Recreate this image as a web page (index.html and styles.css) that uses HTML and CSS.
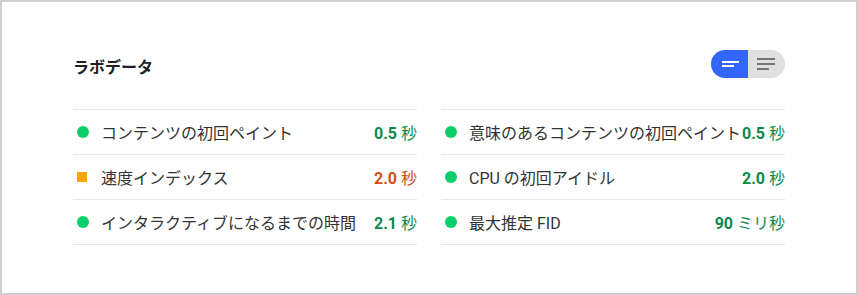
FILE: index.html
```html
<!DOCTYPE html>
<html lang="ja">
<head>
<meta charset="utf-8">
<link rel="stylesheet" href="styles.css">
</head>
<body>
<div class="frame">
  <div class="header">
    <h2 class="title">ラボデータ</h2>
    <div class="toggle">
      <span class="seg seg-on">
        <svg width="17" height="6" viewBox="0 0 17 6"><rect x="0" y="0" width="17" height="2" fill="#fff"/><rect x="0" y="4" width="12" height="2" fill="#fff"/></svg>
      </span>
      <span class="seg seg-off">
        <svg width="18" height="13" viewBox="0 0 18 13"><rect x="0" y="0" width="18" height="2" fill="#757575"/><rect x="0" y="5" width="18" height="2" fill="#757575"/><rect x="0" y="10" width="12" height="2" fill="#757575"/></svg>
      </span>
    </div>
  </div>
  <div class="grid">
    <div class="col">
      <div class="row"><span class="icon"><span class="dot"></span></span><span class="label">コンテンツの初回ペイント</span><span class="val pass">0.5 <span class="unit">秒</span></span></div>
      <div class="row"><span class="icon"><span class="sq"></span></span><span class="label">速度インデックス</span><span class="val avg">2.0 <span class="unit">秒</span></span></div>
      <div class="row"><span class="icon"><span class="dot"></span></span><span class="label">インタラクティブになるまでの時間</span><span class="val pass">2.1 <span class="unit">秒</span></span></div>
    </div>
    <div class="col">
      <div class="row"><span class="icon"><span class="dot"></span></span><span class="label">意味のあるコンテンツの初回ペイント</span><span class="val pass">0.5 <span class="unit">秒</span></span></div>
      <div class="row"><span class="icon"><span class="dot"></span></span><span class="label">CPU の初回アイドル</span><span class="val pass">2.0 <span class="unit">秒</span></span></div>
      <div class="row"><span class="icon"><span class="dot"></span></span><span class="label">最大推定 FID</span><span class="val pass">90 <span class="unit">ミリ秒</span></span></div>
    </div>
  </div>
</div>
</body>
</html>
```

FILE: styles.css
```css
html, body {
  margin: 0;
  padding: 0;
  background: #fff;
}
body {
  font-family: Roboto, "Noto Sans CJK JP", sans-serif;
  color: #212121;
}
.frame {
  box-sizing: border-box;
  width: 858px;
  height: 295px;
  border: 2px solid #cfcfcf;
  padding: 48px 71px 0 71px;
}
.header {
  display: flex;
  justify-content: space-between;
  align-items: flex-start;
  height: 28px;
  margin-bottom: 31px;
}
.title {
  margin: 0;
  padding-top: 8px;
  font-size: 16px;
  line-height: 20px;
  font-weight: 700;
  color: #212121;
}
.toggle {
  display: flex;
  width: 74px;
  height: 28px;
  border-radius: 14px;
  overflow: hidden;
}
.seg {
  flex: 1;
  display: flex;
  align-items: center;
  justify-content: center;
}
.seg-on {
  background: #3366ff;
}
.seg-on svg { margin-left: 2px; }
.seg-off {
  background: #e0e0e0;
}
.seg-off svg { margin-right: 2px; }
.grid {
  display: grid;
  grid-template-columns: 344px 344px;
  column-gap: 24px;
}
.col {
  border-bottom: 1px solid #e6e6e6;
}
.row {
  display: flex;
  align-items: center;
  height: 44px;
  border-top: 1px solid #e6e6e6;
  font-size: 16px;
}
.icon {
  width: 12px;
  margin-left: 4px;
  margin-right: 12px;
  display: flex;
  align-items: center;
}
.dot {
  width: 12px;
  height: 12px;
  border-radius: 50%;
  background: #0cce6b;
}
.sq {
  width: 10px;
  height: 10px;
  background: #ffa400;
}
.label {
  flex: 1;
  white-space: nowrap;
  color: #333;
}
.val {
  font-weight: 700;
  white-space: nowrap;
}
.unit {
  font-weight: 400;
}
.pass { color: #0d8a4b; }
.avg { color: #d14f17; }
```
